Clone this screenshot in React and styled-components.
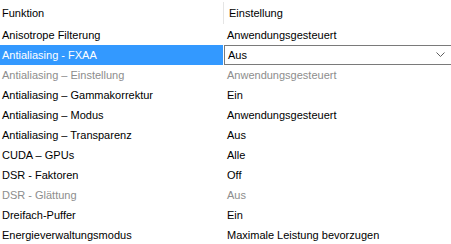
import React from "react";
import styled, { createGlobalStyle } from "styled-components";

const Global = createGlobalStyle`
  html, body { margin: 0; padding: 0; background: #fff; }
  body { font-family: "Liberation Sans", Arial, sans-serif; font-size: 11px; color: #000; }
`;

const Table = styled.div`
  width: 451px;
  height: 244px;
  overflow: hidden;
  display: grid;
  grid-template-columns: 223px 1fr;
  grid-auto-rows: 20px;
  grid-template-rows: 25px;
  background: #fff;
`;

const HeadCell = styled.div`
  display: flex;
  align-items: center;
  padding-left: ${(p) => (p.$right ? "5px" : "2px")};
  padding-bottom: 1px;
  border-left: ${(p) => (p.$right ? "1px solid #e5e5e5" : "none")};
  margin-top: 2px;
  margin-bottom: 1px;
`;

const NameCell = styled.div`
  display: flex;
  align-items: center;
  padding-left: 2px;
  white-space: nowrap;
  background: ${(p) => (p.$selected ? "#3399ff" : "transparent")};
  color: ${(p) => (p.$selected ? "#fff" : p.$disabled ? "#8d8d8d" : "#000")};
`;

const ValueCell = styled.div`
  display: flex;
  align-items: center;
  padding-left: 4px;
  white-space: nowrap;
  color: ${(p) => (p.$disabled ? "#8d8d8d" : "#000")};
`;

const Select = styled.div`
  display: flex;
  align-items: center;
  justify-content: space-between;
  margin-left: 1px;
  padding-left: 3px;
  padding-right: 6px;
  border-top: 1px solid #7a7a7a;
  border-bottom: 1px solid #7a7a7a;
  border-left: 1px solid #7a7a7a;
  background: #fff;
`;

const Chevron = () => (
  <svg width="9" height="6" viewBox="0 0 9 6">
    <path d="M0.5 0.5 L4.5 4.5 L8.5 0.5" fill="none" stroke="#5f5f5f" strokeWidth="1" />
  </svg>
);

const rows = [
  ["Anisotrope Filterung", "Anwendungsgesteuert"],
  ["Antialiasing - FXAA", "Aus", "selected"],
  ["Antialiasing – Einstellung", "Anwendungsgesteuert", "disabled"],
  ["Antialiasing – Gammakorrektur", "Ein"],
  ["Antialiasing – Modus", "Anwendungsgesteuert"],
  ["Antialiasing – Transparenz", "Aus"],
  ["CUDA – GPUs", "Alle"],
  ["DSR - Faktoren", "Off"],
  ["DSR - Glättung", "Aus", "disabled"],
  ["Dreifach-Puffer", "Ein"],
  ["Energieverwaltungsmodus", "Maximale Leistung bevorzugen"],
];

export default function App() {
  return (
    <>
      <Global />
      <Table>
        <HeadCell>Funktion</HeadCell>
        <HeadCell $right>Einstellung</HeadCell>
        {rows.map(([name, value, state]) => (
          <React.Fragment key={name}>
            <NameCell $selected={state === "selected"} $disabled={state === "disabled"}>
              {name}
            </NameCell>
            {state === "selected" ? (
              <Select>
                <span>{value}</span>
                <Chevron />
              </Select>
            ) : (
              <ValueCell $disabled={state === "disabled"}>{value}</ValueCell>
            )}
          </React.Fragment>
        ))}
      </Table>
    </>
  );
}
